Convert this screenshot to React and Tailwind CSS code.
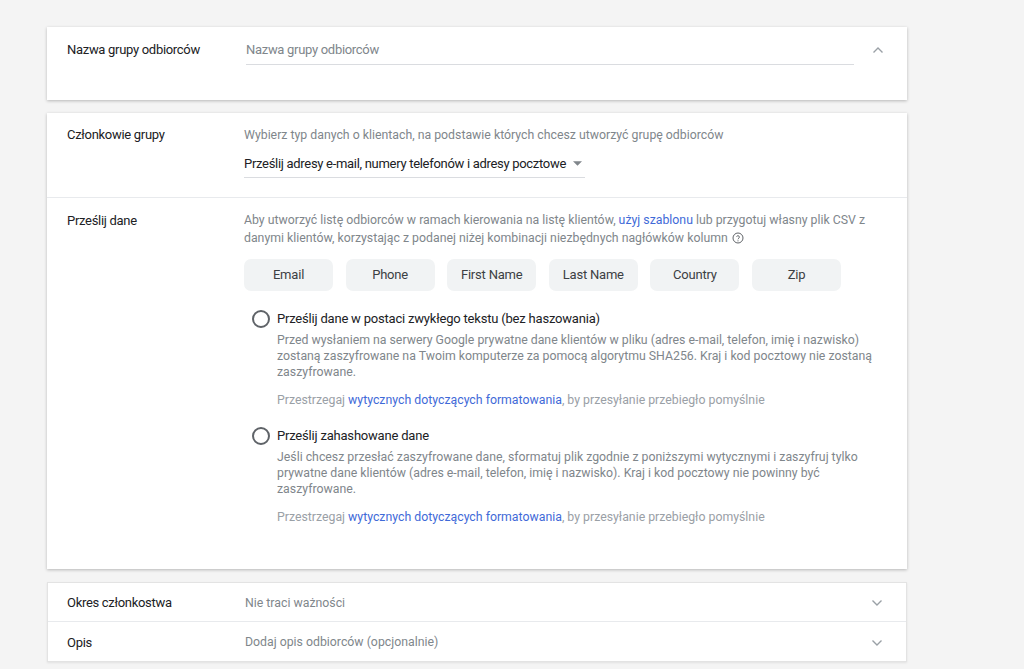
import React from 'react';

const ChevronUp = () => (
  <svg width="12" height="8" viewBox="0 0 12 8" className="text-[#9aa0a6]">
    <path d="M1.5 6.5 6 2l4.5 4.5" fill="none" stroke="currentColor" strokeWidth="1.4" />
  </svg>
);

const ChevronDown = () => (
  <svg width="12" height="8" viewBox="0 0 12 8" className="text-[#9aa0a6]">
    <path d="M1.5 1.5 6 6l4.5-4.5" fill="none" stroke="currentColor" strokeWidth="1.4" />
  </svg>
);

const HelpIcon = () => (
  <svg width="12" height="12" viewBox="0 0 24 24" className="inline-block ml-1 -mt-0.5 text-[#5f6368]">
    <circle cx="12" cy="12" r="10" fill="none" stroke="currentColor" strokeWidth="2" />
    <path d="M9.2 9.3a2.9 2.9 0 0 1 5.6 1c0 1.9-2.8 2.4-2.8 4.2" fill="none" stroke="currentColor" strokeWidth="2" />
    <circle cx="12" cy="17.6" r="1.2" fill="currentColor" />
  </svg>
);

const Radio = () => (
  <span className="block w-[18px] h-[18px] rounded-full border-2 border-[#5f6368] shrink-0" />
);

const chips = ['Email', 'Phone', 'First Name', 'Last Name', 'Country', 'Zip'];

const UploadOption = ({ title, children }) => (
  <div className="flex gap-[7px] pl-[8px]">
    <div className="pt-[1px]"><Radio /></div>
    <div className="flex-1">
      <div className="text-[13px] tracking-[-0.2px] text-[#202124] leading-[20px]">{title}</div>
      <p className="text-[12.3px] text-[#80868b] leading-[16px] mt-[3px]">{children}</p>
      <p className="text-[12.3px] text-[#9aa0a6] leading-[16px] mt-[12px]">
        Przestrzegaj <a href="#" className="text-[#3f6ad8]">wytycznych dotyczących formatowania</a>, by przesyłanie przebiegło pomyślnie
      </p>
    </div>
  </div>
);

export default function App() {
  return (
    <div className="min-h-[669px] bg-[#f4f4f4] pt-[27px] pl-[47px] w-[1024px]" style={{ fontFamily: 'Roboto, "Noto Sans", sans-serif' }}>
      <div className="w-[860px] flex flex-col gap-[13px]">
        {/* Nazwa grupy */}
        <div className="bg-white shadow-[0_1px_3px_rgba(0,0,0,0.25)] h-[73px] flex pl-[20px] pr-[23px] pt-[13px]">
          <div className="w-[179px] text-[13px] tracking-[-0.3px] text-[#202124] leading-[20px]">Nazwa grupy odbiorców</div>
          <div className="w-[608px] border-b border-[#dadce0] h-[25px] text-[13px] tracking-[-0.3px] text-[#80868b] leading-[20px]">Nazwa grupy odbiorców</div>
          <div className="flex-1 flex justify-end pt-[6px]"><ChevronUp /></div>
        </div>

        {/* Członkowie + dane */}
        <div className="bg-white shadow-[0_1px_3px_rgba(0,0,0,0.25)]">
          <div className="flex pl-[20px] pt-[12px] pb-[19px] border-b border-[#e8eaed]">
            <div className="w-[177px] text-[13px] tracking-[-0.3px] text-[#202124] leading-[20px]">Członkowie grupy</div>
            <div>
              <div className="text-[12.3px] text-[#80868b] leading-[20px]">Wybierz typ danych o klientach, na podstawie których chcesz utworzyć grupę odbiorców</div>
              <div className="mt-[8px] w-[341px] border-b border-[#dadce0] h-[25px] flex items-center gap-[7px] text-[13px] tracking-[-0.3px] text-[#202124] leading-[20px] pb-[3px] whitespace-nowrap">
                <span>Prześlij adresy e-mail, numery telefonów i adresy pocztowe</span>
                <svg width="9" height="5" viewBox="0 0 10 5"><path d="M0 0h10L5 5z" fill="#80868b" /></svg>
              </div>
            </div>
          </div>

          <div className="flex pl-[20px] pt-[13px] pb-[44px]">
            <div className="w-[177px] text-[13px] tracking-[-0.3px] text-[#202124] leading-[20px]">Prześlij dane</div>
            <div className="w-[640px]">
              <p className="text-[12.3px] text-[#80868b] leading-[18px]">
                Aby utworzyć listę odbiorców w ramach kierowania na listę klientów, <a href="#" className="text-[#3f6ad8]">użyj szablonu</a> lub przygotuj własny plik CSV z danymi klientów, korzystając z podanej niżej kombinacji niezbędnych nagłówków kolumn<HelpIcon />
              </p>
              <div className="flex gap-[12.6px] mt-[12px]">
                {chips.map((c) => (
                  <div key={c} className="w-[89px] h-[32px] rounded-[7px] bg-[#f1f3f4] flex items-center justify-center text-[13px] tracking-[-0.2px] text-[#3c4043]">{c}</div>
                ))}
              </div>
              <div className="mt-[18px] flex flex-col gap-[18px]">
                <UploadOption title="Prześlij dane w postaci zwykłego tekstu (bez haszowania)">
                  Przed wysłaniem na serwery Google prywatne dane klientów w pliku (adres e-mail, telefon, imię i nazwisko) zostaną zaszyfrowane na Twoim komputerze za pomocą algorytmu SHA256. Kraj i kod pocztowy nie zostaną zaszyfrowane.
                </UploadOption>
                <UploadOption title="Prześlij zahashowane dane">
                  Jeśli chcesz przesłać zaszyfrowane dane, sformatuj plik zgodnie z poniższymi wytycznymi i zaszyfruj tylko prywatne dane klientów (adres e-mail, telefon, imię i nazwisko). Kraj i kod pocztowy nie powinny być zaszyfrowane.
                </UploadOption>
              </div>
            </div>
          </div>
        </div>

        {/* Okres + Opis */}
        <div className="bg-white border border-[#e3e3e3] shadow-[0_1px_2px_rgba(0,0,0,0.08)]">
          <div className="flex items-center h-[39px] pt-[2px] pl-[19px] pr-[23px] border-b border-[#e8eaed]">
            <div className="w-[178px] text-[13px] tracking-[-0.3px] text-[#202124]">Okres członkostwa</div>
            <div className="flex-1 text-[12.3px] text-[#80868b]">Nie traci ważności</div>
            <ChevronDown />
          </div>
          <div className="flex items-center h-[39px] pt-[2px] pl-[19px] pr-[23px]">
            <div className="w-[178px] text-[13px] tracking-[-0.3px] text-[#202124]">Opis</div>
            <div className="flex-1 text-[12.3px] text-[#80868b]">Dodaj opis odbiorców (opcjonalnie)</div>
            <ChevronDown />
          </div>
        </div>
      </div>
    </div>
  );
}
